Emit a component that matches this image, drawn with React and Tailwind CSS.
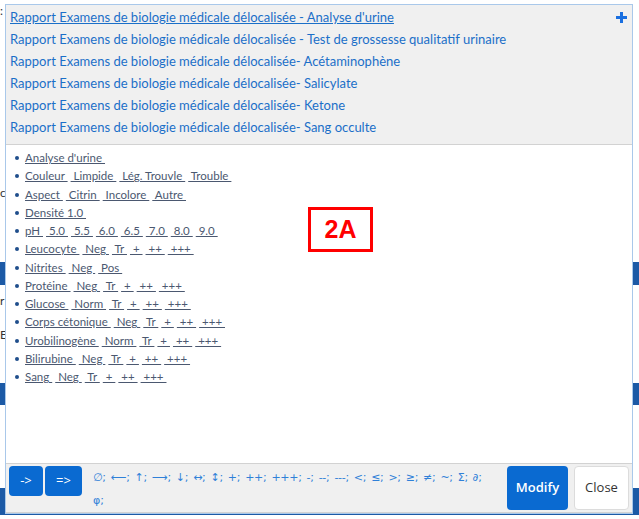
import React from "react";

const reports = [
  "Rapport Examens de biologie médicale délocalisée - Analyse d'urine",
  "Rapport Examens de biologie médicale délocalisée - Test de grossesse qualitatif urinaire",
  "Rapport Examens de biologie médicale délocalisée- Acétaminophène",
  "Rapport Examens de biologie médicale délocalisée- Salicylate",
  "Rapport Examens de biologie médicale délocalisée- Ketone",
  "Rapport Examens de biologie médicale délocalisée- Sang occulte",
];

const rows = [
  ["Analyse d'urine"],
  ["Couleur", "Limpide", "Lég. Trouvle", "Trouble"],
  ["Aspect", "Citrin", "Incolore", "Autre"],
  ["Densité 1.0"],
  ["pH", "5.0", "5.5", "6.0", "6.5", "7.0", "8.0", "9.0"],
  ["Leucocyte", "Neg", "Tr", "+", "++", "+++"],
  ["Nitrites", "Neg", "Pos"],
  ["Protéine", "Neg", "Tr", "+", "++", "+++"],
  ["Glucose", "Norm", "Tr", "+", "++", "+++"],
  ["Corps cétonique", "Neg", "Tr", "+", "++", "+++"],
  ["Urobilinogène", "Norm", "Tr", "+", "++", "+++"],
  ["Bilirubine", "Neg", "Tr", "+", "++", "+++"],
  ["Sang", "Neg", "Tr", "+", "++", "+++"],
];

const symbols = [
  "∅;", "⟵;", "↑;", "⟶;", "↓;", "↔;", "↕;", "+;", "++;", "+++;",
  "-;", "--;", "---;", "<;", "≤;", ">;", "≥;", "≠;", "~;", "Σ;", "∂;",
];

const PlusIcon = () => (
  <svg width="13" height="13" viewBox="0 0 13 13">
    <path d="M6.5 1v11M1 6.5h11" stroke="#1a6fe0" strokeWidth="3" />
  </svg>
);

export default function App() {
  return (
    <div className="relative w-[639px] h-[519px] bg-white overflow-hidden font-['Lato',sans-serif]">
      {/* page behind the modal */}
      <div className="absolute left-0 top-[262px] w-full h-[23px] bg-[#1c5aa6]" />
      <div className="absolute left-0 top-[383px] w-full h-[22px] bg-[#1c5aa6]" />
      <div className="absolute left-0 top-[488px] w-full h-[27px] bg-[#1c5aa6]" />
      <div className="absolute left-0 top-[2px] text-[12px] text-[#333]">:</div>
      <div className="absolute left-0 top-[184px] text-[12px] text-[#333]">c</div>
      <div className="absolute left-0 top-[292px] text-[12px] text-[#333]">r</div>
      <div className="absolute left-0 top-[326px] text-[12px] text-[#333]">E</div>

      {/* modal */}
      <div className="absolute left-[5px] top-[4px] w-[628px] h-[510px] border border-[#a9c8ea] bg-white flex flex-col">
        <div className="relative h-[140px] shrink-0 bg-[#f0f0f0] border-b border-[#d2d2d2] pl-[4px] pt-[1px]">
          {reports.map((r, i) => (
            <div key={i} className="leading-[22px] text-[13px]">
              <a
                href="#"
                className={`text-[#1b6fc8] ${i === 0 ? "underline" : "no-underline"}`}
              >
                {r}
              </a>
            </div>
          ))}
          <div className="absolute right-[4px] top-[6px]">
            <PlusIcon />
          </div>
        </div>

        <div className="relative flex-1 pl-[8px] pt-[4px]">
          {rows.map((row, i) => (
            <div key={i} className="flex items-center leading-[18.25px] text-[11.5px] text-[#4b5870] whitespace-nowrap">
              <span className="w-[4px] h-[4px] rounded-full bg-[#1f4e8c] ml-[1px] mr-[6px]" />
              {row.map((seg, j) => (
                <span key={j} className="underline mr-[3px]">
                  {j === 0 ? `${seg}\u00a0` : `\u00a0${seg}\u00a0`}
                </span>
              ))}
            </div>
          ))}
          <div className="absolute left-[302px] top-[62px] w-[65px] h-[45px] border-[3px] border-[#ff0000] flex items-center justify-center">
            <span className="text-[25px] font-bold text-[#ff0000] leading-none font-['Liberation_Sans',sans-serif]">
              2A
            </span>
          </div>
        </div>

        <div className="h-[50px] shrink-0 bg-[#f0f0f0] border-t border-b border-[#d2d2d2] flex items-start pt-[2px] pl-[3px] pr-[3px]">
          <button className="shrink-0 w-[34px] h-[30px] rounded-[4px] bg-[#0a6ad1] text-white text-[13px] font-['Open_Sans',sans-serif]">
            -&gt;
          </button>
          <button className="shrink-0 ml-[2px] w-[37px] h-[30px] rounded-[4px] bg-[#0a6ad1] text-white text-[13px] font-['Open_Sans',sans-serif]">
            =&gt;
          </button>
          <div className="ml-[11px] w-[405px] shrink-0 text-[11px] leading-[23px] text-[#2f80d8] font-['DejaVu_Sans',sans-serif]">
            <div className="flex flex-nowrap gap-x-[5px] whitespace-nowrap tracking-[-0.3px]">
              {symbols.map((s, i) => (
                <span key={i}>{s}</span>
              ))}
            </div>
            <div>φ;</div>
          </div>
          <div className="ml-auto shrink-0 flex gap-[6px]">
            <button className="w-[61px] h-[44px] rounded-[4px] bg-[#0a6ad1] text-white text-[13px] font-semibold font-['Open_Sans',sans-serif]">
              Modify
            </button>
            <button className="w-[55px] h-[44px] rounded-[4px] bg-white border border-[#dcdcdc] text-[#333] text-[13px] font-['Open_Sans',sans-serif]">
              Close
            </button>
          </div>
        </div>
      </div>
    </div>
  );
}
